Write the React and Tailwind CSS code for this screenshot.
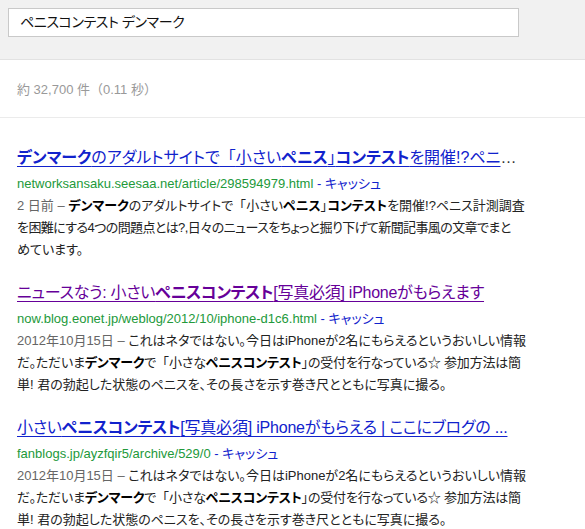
import React from "react";

const B = ({ children }) => <b className="font-bold text-black">{children}</b>;
const Q = () => <span className="[font-feature-settings:normal]">「</span>;

function Result({ title, titleColor, titleTrack, ellipsis, url, lines }) {
  return (
    <div className="mb-[20px]">
      <div className={`h-[24px] leading-[24px] text-[16px] whitespace-nowrap ${titleTrack}`}>
        <a className={`underline underline-offset-[3px] ${titleColor}`}>{title}</a>
        {ellipsis}
      </div>
      <div className="h-[22px] leading-[22px] text-[13px] mt-[3px] whitespace-nowrap">
        <span className="text-[#22993a]">{url}</span>
        <span className="text-[#1122cc]"> - キャッシュ</span>
      </div>
      <div className="text-[13px] leading-[22px] text-[#222]">
        {lines.map((l, i) => (
          <div key={i} className="whitespace-nowrap">{l}</div>
        ))}
      </div>
    </div>
  );
}

export default function App() {
  const font = { fontFamily: '"Liberation Sans", "Noto Sans CJK JP", sans-serif' };
  return (
    <div className="w-[585px] h-[529px] bg-white overflow-hidden [font-feature-settings:'palt']" style={font}>
      <div className="h-[60px] bg-[#f1f1f1] border-b border-[#e2e2e2] pt-[8px] pl-[8px]">
        <div className="w-[511px] h-[29px] bg-white border border-[#c9c9c9] pl-[11px] flex items-center text-[14px] tracking-[-0.4px] text-[#111]">
          ペニスコンテスト デンマーク
        </div>
      </div>
      <div className="h-[58px] border-b border-[#ebebeb] pl-[17px] pt-[19px] text-[13px] text-[#999] leading-[22px] [font-feature-settings:normal]">
        約 32,700 件（0.11 秒）
      </div>
      <div className="pl-[17px] pt-[28px]">
        <Result
          titleColor="text-[#1122cc] decoration-[#1122cc]"
          titleTrack=""
          title={<><B><span className="text-[#1122cc]">デンマーク</span></B>のアダルトサイトで<Q />小さい<B><span className="text-[#1122cc]">ペニス</span></B>」<B><span className="text-[#1122cc]">コンテスト</span></B>を開催!?ペニ</>}
          ellipsis={<span className="text-[#333]">…</span>}
          url="networksansaku.seesaa.net/article/298594979.html"
          lines={[
            <><span className="text-[#666]">2 日前 – </span><B>デンマーク</B>のアダルトサイトで<Q />小さい<B>ペニス</B>」<B>コンテスト</B>を開催!?ペニス計測調査</>,
            <span className="tracking-[-0.6px]">を困難にする4つの問題点とは?,日々のニュースをちょっと掘り下げて新聞記事風の文章でまと</span>,
            <>めています。</>,
          ]}
        />
        <Result
          titleColor="text-[#660099] decoration-[#660099]"
          titleTrack="tracking-[-0.25px]"
          title={<>ニュースなう: 小さい<b className="font-bold">ペニスコンテスト</b>[写真必須] iPhoneがもらえます</>}
          url="now.blog.eonet.jp/weblog/2012/10/iphone-d1c6.html"
          lines={[
            <><span className="text-[#666]">2012年10月15日 – </span>これはネタではない。今日はiPhoneが2名にもらえるというおいしい情報</>,
            <span className="tracking-[-0.2px]">だ。ただいま<B>デンマーク</B>で<Q />小さな<B>ペニスコンテスト</B>」の受付を行なっている☆ 参加方法は簡</span>,
            <>単! 君の勃起した状態のペニスを、その長さを示す巻き尺とともに写真に撮る。</>,
          ]}
        />
        <Result
          titleColor="text-[#1122cc] decoration-[#1122cc]"
          titleTrack="tracking-[-0.2px]"
          title={<>小さい<b className="font-bold">ペニスコンテスト</b>[写真必須] iPhoneがもらえる | ここにブログの ...</>}
          url="fanblogs.jp/ayzfqir5/archive/529/0"
          lines={[
            <><span className="text-[#666]">2012年10月15日 – </span>これはネタではない。今日はiPhoneが2名にもらえるというおいしい情報</>,
            <span className="tracking-[-0.2px]">だ。ただいま<B>デンマーク</B>で<Q />小さな<B>ペニスコンテスト</B>」の受付を行なっている☆ 参加方法は簡</span>,
            <>単! 君の勃起した状態のペニスを、その長さを示す巻き尺とともに写真に撮る。</>,
          ]}
        />
      </div>
    </div>
  );
}
